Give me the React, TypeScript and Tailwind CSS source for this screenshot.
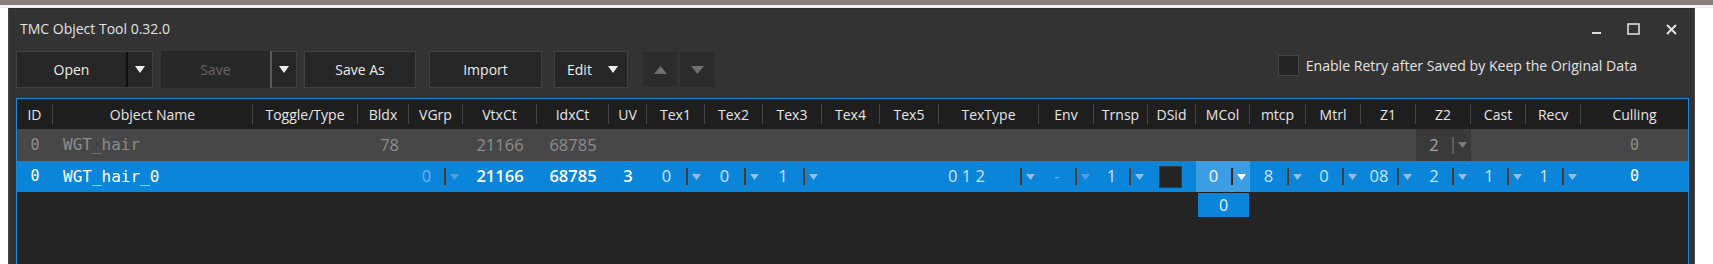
import React from "react";

const SANS = "font-['Open_Sans','Noto_Sans',sans-serif]";
const MONO = "font-['DejaVu_Sans_Mono','Liberation_Mono',monospace]";

function Tri({ up = false, w = 9, h = 6, color = "#fff" }: { up?: boolean; w?: number; h?: number; color?: string }) {
  return (
    <svg width={w} height={h} viewBox={`0 0 ${w} ${h}`} className="block">
      <polygon points={up ? `0,${h} ${w},${h} ${w / 2},0` : `0,0 ${w},0 ${w / 2},${h}`} fill={color} />
    </svg>
  );
}

const COLS: [string, number][] = [
  ["ID", 36], ["Object Name", 200], ["Toggle/Type", 105], ["Bldx", 51], ["VGrp", 54], ["VtxCt", 74], ["IdxCt", 72],
  ["UV", 38], ["Tex1", 58], ["Tex2", 58], ["Tex3", 59], ["Tex4", 58], ["Tex5", 59], ["TexType", 100], ["Env", 55],
  ["Trnsp", 54], ["DSid", 48], ["MCol", 54], ["mtcp", 56], ["Mtrl", 55], ["Z1", 55], ["Z2", 55], ["Cast", 55],
  ["Recv", 55], ["Culling", 107],
];

type Tone = "normal" | "disabled" | "active" | "gray";
const TONES: Record<Tone, { wrap: string; val: string; sep: string; arrow: string }> = {
  normal: { wrap: "", val: "text-[#cfe3f4]", sep: "bg-[#4e3a2e]", arrow: "#8cc0e8" },
  disabled: { wrap: "", val: "text-[#6fb3e6]", sep: "bg-[#4e3a2e]", arrow: "#4aa2e0" },
  active: { wrap: "bg-[#3b9de3]", val: "text-[#eef6fd]", sep: "bg-[#2a2a2a]", arrow: "#ffffff" },
  gray: { wrap: "bg-[#3a3a3a]", val: "text-[#a5a5a5]", sep: "bg-[#5c5c5c]", arrow: "#7c7c7c" },
};

function DD({ value, tone = "normal", left = false }: { value: string; tone?: Tone; left?: boolean }) {
  const t = TONES[tone];
  return (
    <div className={`flex items-center h-full w-full ${t.wrap}`}>
      <div className={`flex-1 ${left ? "pl-[9px] text-left" : "text-center"} ${t.val} whitespace-pre`}>{value}</div>
      <div className={`w-[2px] h-[17px] ${t.sep}`} />
      <div className="w-[17px] flex justify-center">
        <Tri w={9} h={6} color={t.arrow} />
      </div>
    </div>
  );
}

type Cell = React.ReactNode;

function Row({ cells, className }: { cells: Cell[]; className: string }) {
  return (
    <div className={`flex ${className}`}>
      {COLS.map(([name, w], i) => (
        <div key={name} className="h-full flex items-center shrink-0" style={{ width: w }}>
          {cells[i] ?? null}
        </div>
      ))}
    </div>
  );
}

const C = ({ children, cls = "" }: { children: React.ReactNode; cls?: string }) => (
  <div className={`w-full text-center ${cls}`}>{children}</div>
);

export default function App() {
  const row1: Cell[] = [];
  row1[0] = <C cls={MONO + " text-[15px]"}>0</C>;
  row1[1] = <div className={`${MONO} text-[16px] pl-[10px]`}>WGT_hair</div>;
  row1[3] = <div className="w-full text-right pr-[10px]">78</div>;
  row1[5] = <C>21166</C>;
  row1[6] = <C>68785</C>;
  row1[21] = <DD value="2" tone="gray" />;
  row1[24] = <C cls={MONO + " text-[15px]"}>0</C>;

  const row2: Cell[] = [];
  row2[0] = <C cls={MONO + " text-[15px]"}>0</C>;
  row2[1] = <div className={`${MONO} text-[16px] pl-[10px]`}>WGT_hair_0</div>;
  row2[4] = <DD value="0" tone="disabled" />;
  row2[5] = <C cls="font-semibold">21166</C>;
  row2[6] = <C cls="font-semibold">68785</C>;
  row2[7] = <C cls="font-semibold">3</C>;
  row2[8] = <DD value="0" />;
  row2[9] = <DD value="0" />;
  row2[10] = <DD value="1" />;
  row2[13] = <DD value="0 1 2" left />;
  row2[14] = <DD value="-" tone="disabled" />;
  row2[15] = <DD value="1" />;
  row2[16] = (
    <div className="w-full flex justify-center pr-[4px]">
      <div className="w-[23px] h-[22px] bg-[#242424] border border-[#3a3a3a]" />
    </div>
  );
  row2[17] = <DD value="0" tone="active" />;
  row2[18] = <DD value="8" />;
  row2[19] = <DD value="0" />;
  row2[20] = <DD value="08" />;
  row2[21] = <DD value="2" />;
  row2[22] = <DD value="1" />;
  row2[23] = <DD value="1" />;
  row2[24] = <C cls={MONO + " text-[15px]"}>0</C>;

  return (
    <div className={`w-[1713px] h-[264px] bg-white overflow-hidden ${SANS}`}>
      <div className="h-[5px] bg-[#857e7b]" />
      <div className="h-[3px] bg-[#f1f1f1]" />
      <div className="ml-[8px] w-[1687px] h-[260px] bg-[#333333] border border-[#484848] border-t-[#2c2c2c]">
        {/* title bar */}
        <div className="h-[38px] flex items-center justify-between pl-[11px] pr-[17px]">
          <span className="text-[14px] text-[#e2e2e2]">TMC Object Tool 0.32.0</span>
          <div className="flex items-center gap-[26px] pt-[2px]">
            <svg width="9" height="12" viewBox="0 0 9 12"><rect x="0" y="9" width="9" height="2" fill="#dcdcdc" /></svg>
            <svg width="13" height="12" viewBox="0 0 13 12"><rect x="1" y="1" width="11" height="10" fill="none" stroke="#dcdcdc" strokeWidth="1.6" /></svg>
            <svg width="11" height="11" viewBox="0 0 11 11"><path d="M1 1 L10 10 M10 1 L1 10" stroke="#e4e4e4" strokeWidth="2" /></svg>
          </div>
        </div>
        {/* toolbar */}
        <div className="mt-[4px] h-[37px] flex items-center pl-[7px] pr-[57px] text-[14px]">
          <div className="flex h-[37px] border border-[#404040] bg-[#262626]">
            <div className="w-[109px] flex items-center justify-center text-[#ececec]">Open</div>
            <div className="w-[2px] bg-[#0d0d0d]" />
            <div className="flex-1 w-[24px] flex items-center justify-center"><Tri w={10} h={7} color="#ededed" /></div>
          </div>
          <div className="ml-[8px] flex h-[37px]">
            <div className="w-[109px] bg-[#282828] flex items-center justify-center text-[#666666]">Save</div>
            <div className="w-[2px] bg-[#5a5a5a]" />
            <div className="w-[25px] border border-[#404040] border-l-0 bg-[#262626] flex items-center justify-center"><Tri w={10} h={7} color="#ededed" /></div>
          </div>
          <div className="ml-[7px] w-[112px] h-[37px] border border-[#404040] bg-[#262626] flex items-center justify-center text-[#ececec]">Save As</div>
          <div className="ml-[13px] w-[113px] h-[37px] border border-[#404040] bg-[#262626] flex items-center justify-center text-[#ececec]">Import</div>
          <div className="ml-[12px] w-[74px] h-[37px] border border-[#404040] bg-[#262626] flex items-center pl-[12px] gap-[16px] text-[#ececec]">
            <span>Edit</span>
            <Tri w={10} h={7} color="#ededed" />
          </div>
          <div className="ml-[15px] w-[34px] h-[35px] bg-[#2b2b2b] flex items-center justify-center"><Tri up w={13} h={8} color="#6e6e6e" /></div>
          <div className="ml-[3px] w-[35px] h-[35px] bg-[#2b2b2b] flex items-center justify-center"><Tri w={13} h={8} color="#6e6e6e" /></div>
          <div className="ml-auto flex items-center gap-[7px] -mt-[8px]">
            <div className="w-[21px] h-[21px] bg-[#242424] border border-[#454545]" />
            <span className="text-[14.1px] text-[#e2e2e2]">Enable Retry after Saved by Keep the Original Data</span>
          </div>
        </div>
        {/* table */}
        <div className="relative mt-[10px] ml-[7px] w-[1673px] h-[200px] border border-[#1b8ad6] bg-[#242424]">
          <div className="flex h-[30px] bg-[#1e1e1e] text-[14px] text-[#e6e6e6]">
            {COLS.map(([name, w], i) => (
              <div key={name} className="flex items-center shrink-0" style={{ width: w }}>
                <div className="flex-1 text-center">{name}</div>
                {i < COLS.length - 1 && <div className="w-px h-[20px] bg-[#464646]" />}
              </div>
            ))}
          </div>
          <Row cells={row1} className="h-[32px] bg-[#474747] text-[#8c8c8c] text-[16.5px]" />
          <Row cells={row2} className="h-[31px] bg-[#0a85d9] text-white text-[16.5px]" />
          <div className="absolute left-[1180px] top-[93px] w-[53px] h-[26px] bg-[#0a85d9] border border-[#1f1f1f] flex items-center justify-center text-[16px] text-[#e8f3fc]">
            0
          </div>
        </div>
      </div>
    </div>
  );
}
